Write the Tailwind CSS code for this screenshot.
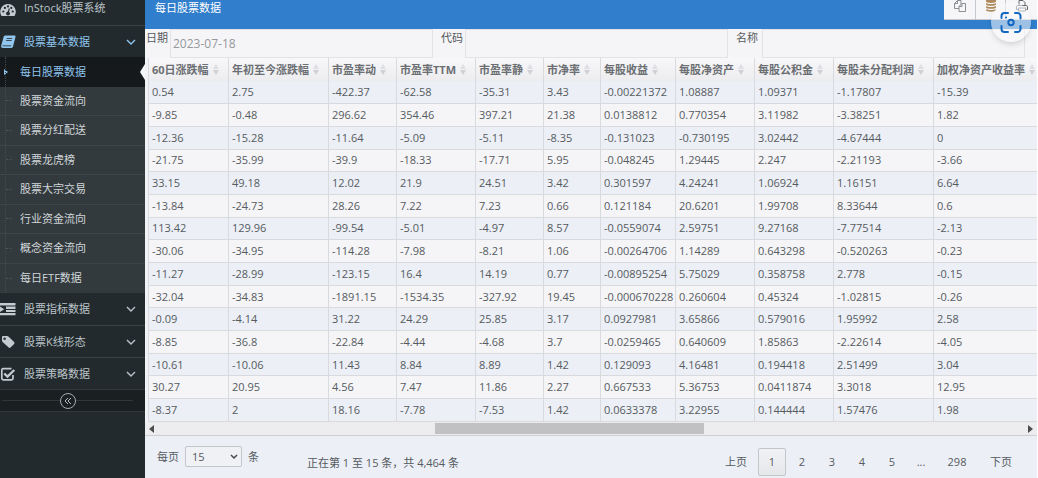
<!DOCTYPE html>
<html lang="zh-CN">
<head>
<meta charset="utf-8">
<title>InStock股票系统</title>
<script src="https://cdn.jsdelivr.net/npm/@tailwindcss/browser@4"></script>
</head>
<body class="flex min-h-screen bg-[#eceff6] font-['Open_Sans','Noto_Sans_CJK_SC',sans-serif] text-[11px] leading-4 text-[#555b60]">

<aside class="flex w-[145px] shrink-0 flex-col bg-[#222a2d] text-[#bcc4c9]">
  <a href="#" class="flex h-[26px] items-start gap-2 border-b border-[#3a4245]">
    <svg class="mt-[2px] h-4 w-4" viewBox="0 0 16 16"><path fill="#c3cbd0" d="M1.500 14A7.800 7.800 0 0 1 8 2a7.800 7.800 0 0 1 6.500 12z"/><g fill="#222a2d"><circle cx="3.300" cy="9.500" r="1.100"/><circle cx="4.900" cy="5.900" r="1.100"/><circle cx="8" cy="4.400" r="1.100"/><circle cx="11.300" cy="5.900" r="1.100"/><circle cx="12.700" cy="9.500" r="1.100"/><circle cx="8" cy="11.500" r="1.900"/></g><path d="M8 11.500 9.300 6.500" stroke="#222a2d" stroke-width="1.100"/></svg>
    <span>InStock股票系统</span>
  </a>
  <button class="flex h-[31px] items-center gap-2 text-left text-[#90c6ee]">
    <svg class="h-4 w-4" viewBox="0 0 16 16"><path fill="#90c6ee" d="M5.500 1.500h9c.8 0 1.200.6 1 1.400L13 12.600c-.2.700-.8 1.400-1.500 1.400H3.200c-1.600 0-2.400-1-2-2.300L3.600 3C3.900 2 4.600 1.500 5.500 1.500z"/><path d="M6.700 4.500h5.500M6.100 6.500h5.500M2.700 11.800h8.500" stroke="#222a2d" fill="none" stroke-width=".8"/></svg>
    <span class="flex-1">股票基本数据</span>
    <svg class="mr-2 h-3 w-3" viewBox="0 0 12 12"><path d="m2 4 4 4 4-4" fill="none" stroke="currentColor" stroke-width="1.400"/></svg>
  </button>
  <nav class="relative grid h-[236px] grid-rows-8 bg-[#333a3d] text-[#d0d6da]">
    <a href="#" class="relative flex items-center bg-[#15191c] pl-5 text-[#90c6ee]">每日股票数据
      <svg class="absolute left-1 h-2 w-1" viewBox="0 0 4 8"><path fill="#90c6ee" d="m0 1 4 3-4 3z"/></svg>
      <svg class="absolute right-0 h-4 w-[5px]" viewBox="0 0 5 16"><path fill="#f5f5f8" d="M5 0v16L0 8z"/></svg>
    </a>
    <a href="#" class="flex items-center border-b border-[#3d4548]"><span class="ml-[6px] mr-2 w-[6px] border-t border-dotted border-[#4c5559]"></span>股票资金流向</a>
    <a href="#" class="flex items-center border-b border-[#3d4548]"><span class="ml-[6px] mr-2 w-[6px] border-t border-dotted border-[#4c5559]"></span>股票分红配送</a>
    <a href="#" class="flex items-center border-b border-[#3d4548]"><span class="ml-[6px] mr-2 w-[6px] border-t border-dotted border-[#4c5559]"></span>股票龙虎榜</a>
    <a href="#" class="flex items-center border-b border-[#3d4548]"><span class="ml-[6px] mr-2 w-[6px] border-t border-dotted border-[#4c5559]"></span>股票大宗交易</a>
    <a href="#" class="flex items-center border-b border-[#3d4548]"><span class="ml-[6px] mr-2 w-[6px] border-t border-dotted border-[#4c5559]"></span>行业资金流向</a>
    <a href="#" class="flex items-center border-b border-[#3d4548]"><span class="ml-[6px] mr-2 w-[6px] border-t border-dotted border-[#4c5559]"></span>概念资金流向</a>
    <a href="#" class="flex items-center"><span class="ml-[6px] mr-2 w-[6px] border-t border-dotted border-[#4c5559]"></span>每日ETF数据</a>
    <span class="absolute bottom-0 left-[5px] top-0 border-l border-dotted border-[#434b4f]"></span>
  </nav>
  <button class="flex h-[33px] items-center gap-2 border-b border-[#3a4245] text-left">
    <svg class="h-4 w-4" viewBox="0 0 16 16" fill="#c3cbd0"><path d="M0 2h15.500v2.500H0zM6 5.500h9.500V8H6zM6 9h9.500v2H6zM0 12h15.500v2.300H0zM0 5.400l4.300 2.800L0 11z"/></svg>
    <span class="flex-1">股票指标数据</span>
    <svg class="mr-2 h-3 w-3" viewBox="0 0 12 12"><path d="m2 4 4 4 4-4" fill="none" stroke="currentColor" stroke-width="1.400"/></svg>
  </button>
  <button class="flex h-8 items-center gap-2 border-b border-[#3a4245] text-left">
    <svg class="h-4 w-4" viewBox="0 0 16 16"><path fill="#c3cbd0" fill-rule="evenodd" d="M2 3.200C2 2.500 2.500 2 3.200 2H7c.6 0 1.200.3 1.700.8l5.400 5.300c.6.600.6 1.200 0 1.800l-3.600 3.700c-.6.500-1.200.5-1.800 0L2.900 8.300C2.300 7.700 2 7.200 2 6.500zM4.600 3.500a1.200 1.200 0 1 0 0 2.400 1.200 1.200 0 0 0 0-2.400z"/></svg>
    <span class="flex-1">股票K线形态</span>
    <svg class="mr-2 h-3 w-3" viewBox="0 0 12 12"><path d="m2 4 4 4 4-4" fill="none" stroke="currentColor" stroke-width="1.400"/></svg>
  </button>
  <button class="flex h-8 items-center gap-2 border-b border-[#32393c] text-left">
    <svg class="h-4 w-4" viewBox="0 0 16 16" fill="none" stroke="#c3cbd0"><path stroke-width="1.700" d="M13 9v3.300c0 .9-.6 1.500-1.500 1.500H3.300c-.9 0-1.500-.6-1.500-1.500V4.200c0-.9.600-1.500 1.500-1.500h8.200"/><path stroke-width="2.300" d="m4.300 7.500 3.200 3.100L14.300 4"/></svg>
    <span class="flex-1">股票策略数据</span>
    <svg class="mr-2 h-3 w-3" viewBox="0 0 12 12"><path d="m2 4 4 4 4-4" fill="none" stroke="currentColor" stroke-width="1.400"/></svg>
  </button>
  <div class="flex h-[22px] items-center border-b border-[#32393c] bg-[#1a1f22] pl-[2px] pr-3">
    <span class="flex-1 border-t border-[#30373a]"></span>
    <button aria-label="收起菜单" class="flex h-4 w-4 items-center justify-center rounded-full border border-[#a3abb0]"><svg class="h-2 w-2" viewBox="0 0 8 8"><path d="M4 1 1 4l3 3M7 1 4 4l3 3" fill="none" stroke="#b5bdc2"/></svg></button>
    <span class="flex-1 border-t border-[#30373a]"></span>
  </div>
</aside>

<main class="flex min-w-0 flex-1 flex-col border-r border-white">
  <header class="relative flex h-[29px] justify-between bg-[#307ecc] pl-[10px] text-white">
    <h1>每日股票数据</h1>
    <div class="flex h-5 border-b border-[#c4c9cf] bg-[#f6f6f8]">
      <button aria-label="复制" class="flex w-8 items-start justify-center border-r border-[#c4c9cf]"><svg class="h-3 w-3" viewBox="0 0 12 12" fill="#f6f6f8" stroke="#8b8e92"><path d="M3.500.5H7v8H.5v-5zM3.500.5v3h-3"/><path d="M8 3.500h3.500v8H5v-5zM8 3.500v3H5"/></svg></button>
      <button aria-label="导出" class="flex w-[30px] items-start justify-center border-r border-[#c4c9cf]"><svg class="h-3 w-3" viewBox="0 0 12 12" fill="#ad895c"><path d="M1 0h10v1.500c0 1.900-10 1.900-10 0z"/><path d="M1 3c2 1.300 8 1.300 10 0v1.400c0 1.900-10 1.900-10 0zM1 6c2 1.300 8 1.300 10 0v1.400c0 1.900-10 1.900-10 0zM1 9c2 1.300 8 1.300 10 0v1.200c0 1.900-10 1.900-10 0z"/></svg></button>
      <button aria-label="打印" class="flex w-[31px] items-start justify-center"><svg class="h-3 w-3" viewBox="0 0 12 12" fill="none" stroke="#606468"><path d="M3 5.500v-5h4l2 2v3M2.500 9.500h-2V6.700c0-.7.500-1.200 1.200-1.200h8.600c.7 0 1.200.5 1.200 1.200v2.800h-2M2.500 8h7v3h-7z"/></svg></button>
    </div>
    <button aria-label="视觉搜索" class="absolute right-[6px] top-[2px] z-10 h-10 w-10 rounded-full bg-[#fafafc]/55 shadow-md">
      <svg class="h-10 w-10" viewBox="0 0 40 40"><g fill="none" stroke="#1267c1" stroke-width="2" stroke-linecap="round"><path d="M17 11h-3.500a3 3 0 0 0-3 3V16M24 11h2.500a3 3 0 0 1 3 3V16.500M10.500 24v3a3 3 0 0 0 3 3H17M24 30h2.500a3 3 0 0 0 3-3v-3"/><circle cx="20" cy="20.500" r="2.700"/></g><circle cx="15" cy="15.500" r="1.100" fill="#1267c1"/></svg>
    </button>
  </header>

  <form class="flex h-[29px] bg-[#f5f5f8] pr-3">
    <label for="date" class="w-[25px] shrink-0 pl-px pt-px">日期</label>
    <input id="date" value="2023-07-18" class="min-w-0 flex-1 border border-[#e2e2e7] px-[2px] text-[12px] text-[#96989c]">
    <label for="code" class="w-8 shrink-0 pl-2 pt-px">代码</label>
    <input id="code" class="min-w-0 flex-1 border border-[#e2e2e7] px-[2px]">
    <label for="name" class="w-[34px] shrink-0 pl-2 pt-px">名称</label>
    <input id="name" class="min-w-0 flex-1 border border-[#e2e2e7] px-[2px]">
  </form>

  <div class="overflow-hidden border-l-3 border-[#f1f2f6]">
  <table class="h-[364px] w-full table-fixed border-collapse whitespace-nowrap">
    <colgroup><col class="w-[80px]"><col class="w-[100px]"><col class="w-[68px]"><col class="w-[79px]"><col class="w-[68px]"><col class="w-[57px]"><col class="w-[75px]"><col class="w-[79px]"><col class="w-[79px]"><col class="w-[100px]"><col></colgroup>
    <thead><tr id="head" class="h-[23px] bg-linear-to-b from-[#f8f8fa] to-[#ececef] text-left text-[#6b6e72]"></tr></thead>
    <tbody id="rows"></tbody>
  </table>
  </div>

  <div role="scrollbar" aria-controls="rows" aria-orientation="horizontal" aria-valuenow="47" class="flex h-[14px] items-center border-b border-[#cdcdd3] bg-[#ededef] px-1">
    <svg class="h-2 w-[5px]" viewBox="0 0 5 8"><path fill="#4d4d4d" d="M5 0v8L0 4z"/></svg>
    <div class="flex h-[11px] flex-1 px-1"><span class="w-[32%]"></span><span class="w-[31%] bg-[#c1c1c3]"></span></div>
    <svg class="h-2 w-[5px]" viewBox="0 0 5 8"><path fill="#4d4d4d" d="M0 0v8l5-4z"/></svg>
  </div>

  <footer class="flex h-[42px] items-start pl-3 pr-[14px]">
    <div class="flex items-center pt-[10px]">
      <label for="size">每页</label>
      <div class="relative mx-[6px] flex items-center">
        <select id="size" class="h-[21px] w-[57px] appearance-none rounded-xs border border-[#c3c6ca] bg-[#f0f1f5] pl-[6px]"><option>15</option></select>
        <svg class="pointer-events-none absolute right-1 h-2 w-2" viewBox="0 0 8 8"><path d="m1 2 3 3 3-3" fill="none" stroke="#44484c" stroke-width="1.500"/></svg>
      </div>
      <span>条</span>
    </div>
    <p class="ml-12 pt-[19px]">正在第 1 至 15 条，共 4,464 条</p>
    <nav class="ml-auto flex pt-[12px]">
      <button class="h-7 w-11">上页</button>
      <button class="h-7 w-7 rounded-xs border border-[#c3c6ca] bg-linear-to-b from-[#f1f2f6] to-[#e6e7e9]">1</button>
      <button class="ml-px h-7 w-[30px]">2</button>
      <button class="h-7 w-[30px]">3</button>
      <button class="h-7 w-[30px]">4</button>
      <button class="h-7 w-[30px]">5</button>
      <span class="h-7 w-7 text-center leading-7">...</span>
      <button class="h-7 w-11">298</button>
      <button class="h-7 w-11">下页</button>
    </nav>
  </footer>
</main>

<script>
const heads = ['60日涨跌幅','年初至今涨跌幅','市盈率动','市盈率TTM','市盈率静','市净率','每股收益','每股净资产','每股公积金','每股未分配利润','加权净资产收益率'];
const data = `0.54 2.75 -422.37 -62.58 -35.31 3.43 -0.00221372 1.08887 1.09371 -1.17807 -15.39
-9.85 -0.48 296.62 354.46 397.21 21.38 0.0138812 0.770354 3.11982 -3.38251 1.82
-12.36 -15.28 -11.64 -5.09 -5.11 -8.35 -0.131023 -0.730195 3.02442 -4.67444 0
-21.75 -35.99 -39.9 -18.33 -17.71 5.95 -0.048245 1.29445 2.247 -2.21193 -3.66
33.15 49.18 12.02 21.9 24.51 3.42 0.301597 4.24241 1.06924 1.16151 6.64
-13.84 -24.73 28.26 7.22 7.23 0.66 0.121184 20.6201 1.99708 8.33644 0.6
113.42 129.96 -99.54 -5.01 -4.97 8.57 -0.0559074 2.59751 9.27168 -7.77514 -2.13
-30.06 -34.95 -114.28 -7.98 -8.21 1.06 -0.00264706 1.14289 0.643298 -0.520263 -0.23
-11.27 -28.99 -123.15 16.4 14.19 0.77 -0.00895254 5.75029 0.358758 2.778 -0.15
-32.04 -34.83 -1891.15 -1534.35 -327.92 19.45 -0.000670228 0.260604 0.45324 -1.02815 -0.26
-0.09 -4.14 31.22 24.29 25.85 3.17 0.0927981 3.65866 0.579016 1.95992 2.58
-8.85 -36.8 -22.84 -4.44 -4.68 3.7 -0.0259465 0.640609 1.85863 -2.22614 -4.05
-10.61 -10.06 11.43 8.84 8.89 1.42 0.129093 4.16481 0.194418 2.51499 3.04
30.27 20.95 4.56 7.47 11.86 2.27 0.667533 5.36753 0.0411874 3.3018 12.95
-8.37 2 18.16 -7.78 -7.53 1.42 0.0633378 3.22955 0.144444 1.57476 1.98`;
const sort = '<svg class="h-[11px] w-[6px] shrink-0" viewBox="0 0 6 11"><path fill="#dedfe3" d="M3 0l3 5H0z"/><path fill="#d0d1d5" d="M0 6h6l-3 5z"/></svg>';
document.getElementById('head').innerHTML = heads.map(h => `<th scope="col" class="border-l border-[#d9dade] py-0 pl-[3px] pr-0 font-bold"><span class="flex items-center gap-1">${h}${sort}</span></th>`).join('');
document.getElementById('rows').innerHTML = data.split('\n').map(r => '<tr class="h-[22px] border-b border-[#d9dade] bg-[#f5f5f8] odd:bg-[#eceff6]">' + r.split(' ').map(c => `<td class="border-l border-[#d9dade] py-0 pl-[3px] pr-0">${c}</td>`).join('') + '</tr>').join('');
</script>
</body>
</html>
